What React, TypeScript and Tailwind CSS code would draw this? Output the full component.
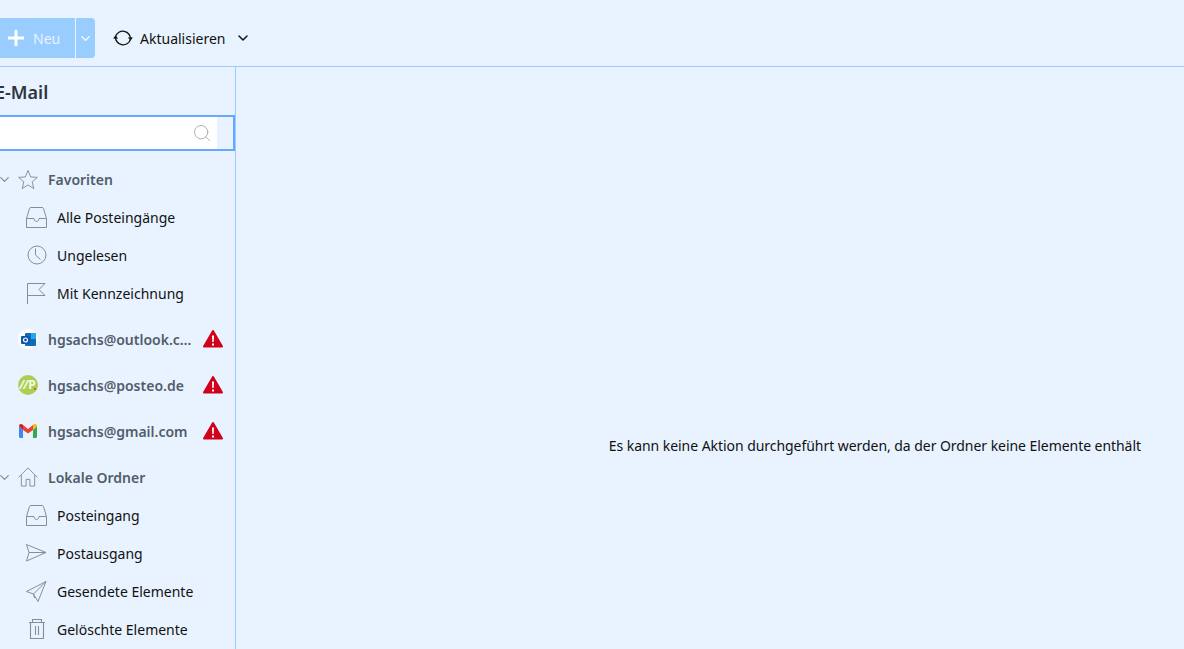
import React, { FC, ReactNode } from "react";
import { ChevronDown, Search } from "lucide-react";

const font = "font-['Noto_Sans','Open_Sans',sans-serif]";
const stroke = "#868d95";

const StarIcon: FC = () => (
  <svg width="21" height="21" viewBox="0 0 21 21" fill="none" stroke={stroke} strokeWidth="1">
    <path d="M10.500 1 13.300 7.800 20.300 8.300 14.900 13 16.600 20 10.500 16.200 4.400 20 6.100 13 .7 8.300 7.700 7.800z" />
  </svg>
);

const InboxIcon: FC = () => (
  <svg width="21" height="21" viewBox="0 0 21 21" fill="none" stroke={stroke} strokeWidth="1">
    <path d="M.5 11.500V20.500h20v-9L17.500 1.500a1.500 1.500 0 0 0-1.500-1H5a1.500 1.500 0 0 0-1.500 1z" />
    <path d="M.5 11.500h7.500c.3 2 1.200 3 2.500 3s2.200-1 2.500-3h7.500" />
  </svg>
);

const ClockIcon: FC = () => (
  <svg width="20" height="20" viewBox="0 0 20 20" fill="none" stroke={stroke} strokeWidth="1">
    <circle cx="10" cy="10" r="9" />
    <path d="M8.500 3.500V10l5 4.500" />
  </svg>
);

const FlagIcon: FC = () => (
  <svg width="19" height="21" viewBox="0 0 19 21" fill="none" stroke={stroke} strokeWidth="1">
    <path d="M.5 21V.5H18l-6 6 6 6H.5" />
  </svg>
);

const OutboxIcon: FC = () => (
  <svg width="21" height="18" viewBox="0 0 21 18" fill="none" stroke={stroke} strokeWidth="1">
    <path d="M.5.5 20 8.500.5 17l2.500-8.500zM3 8.500h17" />
  </svg>
);

const SentIcon: FC = () => (
  <svg width="21" height="21" viewBox="0 0 21 21" fill="none" stroke={stroke} strokeWidth="1">
    <path d="M20 .5.500 10.500l7 2.500 4.500 7.500zM20 .5 7.500 13M7.500 13l1 4" />
  </svg>
);

const HouseIcon: FC = () => (
  <svg width="21" height="20" viewBox="0 0 21 20" fill="none" stroke={stroke} strokeWidth="1">
    <path d="M.5 10.500 10.500.5l10 10M3.500 8V19.500h5v-7h4v7h5V8" />
  </svg>
);

const TrashIcon: FC = () => (
  <svg width="16" height="20" viewBox="0 0 16 20" fill="none" stroke={stroke} strokeWidth="1.100">
    <path d="M0 3.500h16M3.500 3.500v-3h9v3" />
    <path d="M1.500 3.500v16h13v-16" />
    <path d="M6.500 7v9M9.500 7v9" />
  </svg>
);

const RefreshIcon: FC = () => (
  <svg width="20" height="18" viewBox="0 0 20 18" fill="none" stroke="#111" strokeWidth="1.300">
    <path d="M2.500 7.500A7.700 7.700 0 0 1 17.500 10.500" />
    <path d="M17.500 10.500A7.700 7.700 0 0 1 2.500 7.500" />
    <path d="M.8 9.700 2.500 7.500l1.900 2.200M15.600 8.300l1.900 2.200 1.700-2.200" />
  </svg>
);

const PlusIcon: FC = () => (
  <svg width="16" height="16" viewBox="0 0 16 16" fill="#fff">
    <rect x="6.500" y="0" width="3" height="16" />
    <rect x="0" y="6.500" width="16" height="3" />
  </svg>
);

const WarnIcon: FC = () => (
  <svg width="20" height="18" viewBox="0 0 20 18">
    <path d="M10 1 19 16.500H1z" fill="#d0021b" stroke="#d0021b" strokeWidth="2" strokeLinejoin="round" />
    <path d="M9 5.500h2l-.3 6.500H9.300z" fill="#fff" />
    <rect x="9" y="13.500" width="2" height="2" fill="#fff" />
  </svg>
);

const OutlookIcon: FC = () => (
  <div className="w-5 h-5 rounded-full bg-white flex items-center justify-center">
    <svg width="15" height="13" viewBox="0 0 15 13">
      <rect x="4" y="0" width="11" height="13" rx="1" fill="#0f6cbd" />
      <rect x="10" y="0" width="5" height="6" fill="#28a8ea" />
      <rect x="0" y="3" width="9" height="8" rx="1" fill="#0a5aa8" />
      <circle cx="4.500" cy="7" r="2" fill="none" stroke="#fff" strokeWidth="1.200" />
    </svg>
  </div>
);

const PosteoIcon: FC = () => (
  <div className="relative w-5 h-5 rounded-full bg-[#a9d052] flex items-center justify-center text-[#f4f9e8] text-[12px] font-bold leading-none pr-px">
    <span className="italic tracking-[-1px] mr-px">//</span>
    <span>P</span>
    <span className="absolute right-[2px] bottom-[5px] w-[2px] h-[2px] bg-[#e8603c]" />
  </div>
);

const GmailIcon: FC = () => (
  <svg width="18" height="14" viewBox="0 0 18 14" fill="none">
    <path d="M0 2v10.500A1.500 1.500 0 0 0 1.500 14H4V6z" fill="#4285f4" />
    <path d="M14 6v8h2.500a1.500 1.500 0 0 0 1.500-1.500V2z" fill="#34a853" />
    <path d="M4 6 9 9.500 14 6V1L9 5 4 1z" fill="#ea4335" />
    <path d="M0 2 4 6V1L3 .3A2 2 0 0 0 0 2z" fill="#c5221f" />
    <path d="M14 1v5l4-4A2 2 0 0 0 15 .3z" fill="#fbbc04" />
  </svg>
);

const Collapse: FC = () => <ChevronDown size={15} strokeWidth={2} className="text-[#868d95] -ml-[3px] mr-[6px]" />;

const GroupRow: FC<{ icon: ReactNode; label: string }> = ({ icon, label }) => (
  <div className="h-[38px] flex items-center">
    <Collapse />
    <div className="w-5 flex justify-center">{icon}</div>
    <span className="ml-[10px] text-[14px] font-semibold text-[#525c6b]">{label}</span>
  </div>
);

const FolderRow: FC<{ icon: ReactNode; label: string }> = ({ icon, label }) => (
  <div className="h-[38px] flex items-center pl-[26px]">
    <div className="w-[21px] flex justify-center">{icon}</div>
    <span className="ml-[10px] text-[14px] text-[#111]">{label}</span>
  </div>
);

const AccountRow: FC<{ icon: ReactNode; label: string }> = ({ icon, label }) => (
  <div className="h-[46px] flex items-center pl-[18px] pr-[12px]">
    <div className="w-5 flex justify-center shrink-0">{icon}</div>
    <span className="ml-[10px] flex-1 truncate text-[14px] font-semibold text-[#525c6b]">{label}</span>
    <div className="ml-2 shrink-0">
      <WarnIcon />
    </div>
  </div>
);

export default function App() {
  return (
    <div className={`${font} w-[1184px] h-[649px] overflow-hidden bg-[#e8f3ff] flex flex-col`}>
      <div className="h-[67px] shrink-0 border-b border-[#99ccff] flex items-center pt-[10px]">
        <div className="flex h-10 -ml-[4px]">
          <div className="w-[79px] bg-[#99ccff] flex items-center pl-[12px] rounded-l">
            <PlusIcon />
            <span className="ml-[9px] text-[14px] text-[#e8f3ff]">Neu</span>
          </div>
          <div className="ml-px w-[19px] bg-[#99ccff] rounded-r flex items-center justify-center">
            <ChevronDown size={15} className="text-white" />
          </div>
        </div>
        <div className="ml-[18px]">
          <RefreshIcon />
        </div>
        <span className="ml-[7px] text-[14px] text-[#111]">Aktualisieren</span>
        <ChevronDown size={16} strokeWidth={2.200} className="ml-[10px] text-[#111]" />
      </div>
      <div className="flex flex-1 min-h-0">
        <div className="w-[236px] shrink-0 border-r border-[#99ccff]">
          <div className="h-12 flex items-center pt-[2px] -ml-[5px] text-[18px] font-semibold text-[#2d3540]">E-Mail</div>
          <div className="h-9 border-2 border-l-0 border-[#66a8ff] flex">
            <div className="w-[217px] bg-white flex items-center justify-end pr-[5px]">
              <Search size={20} strokeWidth={1.100} className="text-[#a8a8a8]" />
            </div>
          </div>
          <div className="mt-[9px]">
            <GroupRow icon={<StarIcon />} label="Favoriten" />
            <FolderRow icon={<InboxIcon />} label="Alle Posteingänge" />
            <FolderRow icon={<ClockIcon />} label="Ungelesen" />
            <FolderRow icon={<FlagIcon />} label="Mit Kennzeichnung" />
            <div className="h-1" />
            <AccountRow icon={<OutlookIcon />} label="hgsachs@outlook.com" />
            <AccountRow icon={<PosteoIcon />} label="hgsachs@posteo.de" />
            <AccountRow icon={<GmailIcon />} label="hgsachs@gmail.com" />
            <div className="h-1" />
            <GroupRow icon={<HouseIcon />} label="Lokale Ordner" />
            <FolderRow icon={<InboxIcon />} label="Posteingang" />
            <FolderRow icon={<OutboxIcon />} label="Postausgang" />
            <FolderRow icon={<SentIcon />} label="Gesendete Elemente" />
            <FolderRow icon={<TrashIcon />} label="Gelöschte Elemente" />
          </div>
        </div>
        <div className="flex-1 flex items-center justify-end pr-[43px] pt-[175px]">
          <span className="text-[14px] tracking-[-0.05px] text-[#111]">Es kann keine Aktion durchgeführt werden, da der Ordner keine Elemente enthält</span>
        </div>
      </div>
    </div>
  );
}
